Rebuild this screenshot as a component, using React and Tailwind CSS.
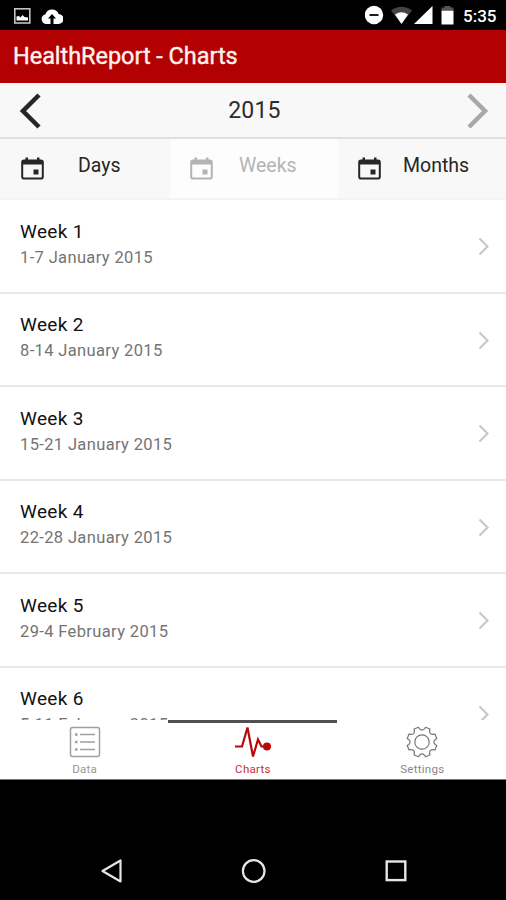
const weeks = [
  ["Week 1", "1-7 January 2015"],
  ["Week 2", "8-14 January 2015"],
  ["Week 3", "15-21 January 2015"],
  ["Week 4", "22-28 January 2015"],
  ["Week 5", "29-4 February 2015"],
  ["Week 6", "5-11 February 2015"],
];

function StatusBar() {
  return (
    <div className="flex h-[30px] shrink-0 items-center bg-black text-white">
      <svg className="mt-px ml-[14px] h-4 w-[17px]" viewBox="0 0 17 16" fill="none">
        <rect x="0.8" y="0.8" width="15" height="14.2" stroke="#c4c4c4" strokeWidth="1.6" />
        <path d="M2.500 12.500V8.500L5 8l1.500 1.500L8.500 7l2 2 3.500 0.500v3z" fill="#fff" />
      </svg>
      <svg className="mt-px ml-[10px] h-4 w-[22px]" viewBox="0 0 22 16" fill="none">
        <path d="M5 16a5 5 0 0 1-.6-9.800A7 7 0 0 1 17.600 6 5 5 0 0 1 17.500 16H12.500V10.500H15L11 6 7 10.500H9.500V16z" fill="#fff" />
      </svg>
      <svg className="ml-auto h-5 w-[90px]" viewBox="0 0 90 20" fill="none">
        <circle cx="9" cy="10" r="9.200" fill="#fff" />
        <path d="M4.500 10h9" stroke="#000" strokeWidth="1.800" />
        <path d="M26 5.500Q36.500-2 47 5.500L36.500 19z" fill="#444" />
        <path d="M30 9.500Q36.500 5 43 9.500L36.500 19z" fill="#fff" />
        <path d="M49 19L67.500 1V19z" fill="#fff" />
        <path d="M76.500 5V2.500h3V1h6v1.500h3V5z" fill="#555" />
        <path d="M76.500 5.500h12V19.500h-12z" fill="#fff" />
      </svg>
      <span className="mt-px mr-[9px] ml-[8px] w-[34px] text-[17px] leading-5 font-medium whitespace-nowrap">5:35</span>
    </div>
  );
}

function CalendarIcon() {
  return (
    <svg className="h-[23px] w-[23px]" viewBox="0 0 23 23" fill="none">
      <rect x="1.200" y="3.500" width="20.600" height="18" rx="1.800" stroke="currentColor" strokeWidth="2" />
      <path d="M1 3h21v4.500H1z M4.500 0.500h2.500V4H4.500z M16 0.500h2.500V4H16z" fill="currentColor" />
      <path d="M12.500 12.500h5v5h-5z" fill="currentColor" />
    </svg>
  );
}

function Period({ label, className, labelClass }) {
  return (
    <div className={`flex h-full ${className}`}>
      <div className="mt-[18px] w-[23px]"><CalendarIcon /></div>
      <span className={`mt-[15px] text-[19.500px] leading-6 ${labelClass}`}>{label}</span>
    </div>
  );
}

function Chevron() {
  return (
    <svg className="mt-[2px] h-[19px] w-[12px]" viewBox="0 0 12 19" fill="none">
      <path d="M1.500 1.500L9.500 9.500L1.500 17.500" stroke="#c8c8c8" strokeWidth="2.200" />
    </svg>
  );
}

// Outline of an eight-toothed gear around the origin.
const gearPoints = Array.from({ length: 8 }, (_, i) => {
  const at = (deg, r) => {
    const a = ((i * 45 + deg) * Math.PI) / 180;
    return `${(r * Math.cos(a)).toFixed(2)} ${(r * Math.sin(a)).toFixed(2)}`;
  };
  return `${i ? "L" : "M"}${at(9 + 22.5, 15.2)}L${at(12 + 22.5, 13.4)}Q${at(45, 10.6)} ${at(33 + 22.5, 13.4)}L${at(36 + 22.5, 15.2)}`;
}).join("") + "Z";

function NavItem({ icon, label, className }) {
  return (
    <div className={`flex flex-1 flex-col items-center border-t-[3px] bg-white ${className}`}>
      <div className="mt-[3px] h-[32px]">{icon}</div>
      <span className="mt-[4px] text-[11.500px] leading-[14px] tracking-[0.300px]">{label}</span>
    </div>
  );
}

export default function App() {
  return (
    <div className="flex h-[900px] w-[506px] flex-col overflow-hidden bg-black font-['Roboto',sans-serif]">
      <StatusBar />
      <header className="flex h-[53px] shrink-0 items-center bg-[#b30000] pt-px pl-[13px] text-[23.500px] tracking-[-0.050px] text-[#fff0f0] [-webkit-text-stroke:0.4px_#fff0f0]">
        HealthReport - Charts
      </header>
      <div className="flex h-[56px] shrink-0 items-center justify-between border-b-2 border-[#e0e0e0] bg-[#f8f8f8] pt-[2px] pr-[17px] pl-[20px]">
        <svg className="h-[36px] w-[22px]" viewBox="0 0 22 36" fill="none">
          <path d="M19 2L3 18L19 34" stroke="#262626" strokeWidth="4.500" />
        </svg>
        <span className="pt-px text-[23px] tracking-[0.200px] text-[#2c2c2c]">2015</span>
        <svg className="h-[36px] w-[22px]" viewBox="0 0 22 36" fill="none">
          <path d="M2 2L18 18L2 34" stroke="#a8a8a8" strokeWidth="4.500" />
        </svg>
      </div>
      <div className="flex h-[61px] shrink-0 border-b-2 border-[#f3f3f3] bg-[#f8f8f8]">
        <Period label="Days" className="w-[170px] pl-[21px] text-[#262626]" labelClass="ml-[34px]" />
        <Period label="Weeks" className="w-[168px] bg-[#fdfdfd] pl-[20px] text-[#b4b4b4]" labelClass="ml-[26px]" />
        <Period label="Months" className="w-[168px] pl-[20px] text-[#262626]" labelClass="ml-[22px]" />
      </div>
      <main className="h-[520px] shrink-0 overflow-hidden bg-white">
        {weeks.map(([title, range]) => (
          <div key={title} className="flex h-[93.500px] items-center justify-between border-b-2 border-[#e8e8e8] pr-[16px] pl-[20px]">
            <div className="pb-[3px]">
              <div className="text-[19px] leading-[26px] tracking-[0.350px] text-[#111]">{title}</div>
              <div className="text-[16.500px] leading-[25px] tracking-[0.360px] text-[#747474]">{range}</div>
            </div>
            <Chevron />
          </div>
        ))}
      </main>
      <nav className="flex h-[60px] shrink-0 border-b border-[#777]">
        <NavItem
          label="Data"
          className="border-white pl-px text-[#969696]"
          icon={
            <svg className="h-8 w-8" viewBox="0 0 32 32" fill="none" stroke="#a0a0a0">
              <rect x="1.500" y="1.500" width="29" height="29" rx="2" strokeWidth="1.500" />
              <path d="M11 8.500h15M11 16h15M11 23.500h15" strokeWidth="1.500" />
              <path d="M6 8.500h2.500M6 16h2.500M6 23.500h2.500" strokeWidth="2.500" />
            </svg>
          }
        />
        <NavItem
          label="Charts"
          className="border-[#505050] pl-px text-[#c83030]"
          icon={
            <svg className="h-8 w-[38px]" viewBox="0 0 38 32" fill="none">
              <path d="M1 20.500H8L13.500 1.500L19 30.500L24 13.500L27.500 20.500H33" stroke="#b80808" strokeWidth="2.200" />
              <circle cx="33" cy="20.500" r="4" fill="#b80808" />
            </svg>
          }
        />
        <NavItem
          label="Settings"
          className="border-white pl-[2px] text-[#888]"
          icon={
            <svg className="h-8 w-8" viewBox="-16 -16 32 32" fill="none" stroke="#777" strokeWidth="1.200" strokeLinejoin="round">
              <path d={gearPoints} />
              <circle r="7.200" />
            </svg>
          }
        />
      </nav>
      <div className="flex h-[120px] shrink-0 items-end bg-black pb-[16px]">
        <svg className="ml-[100px] h-[26px] w-[24px]" viewBox="0 0 24 26" fill="none" stroke="#e6e6e6" strokeWidth="2.200">
          <path d="M20.500 2.500V23.500L2.500 13z" strokeLinejoin="round" />
        </svg>
        <svg className="ml-[117px] h-[26px] w-[26px]" viewBox="0 0 26 26" fill="none" stroke="#e6e6e6" strokeWidth="2.200">
          <circle cx="12.700" cy="13" r="10.800" />
        </svg>
        <svg className="ml-[116px] h-[26px] w-[26px]" viewBox="0 0 26 26" fill="none" stroke="#e6e6e6" strokeWidth="2.400">
          <rect x="3.700" y="3.500" width="18.600" height="18.600" />
        </svg>
      </div>
    </div>
  );
}
